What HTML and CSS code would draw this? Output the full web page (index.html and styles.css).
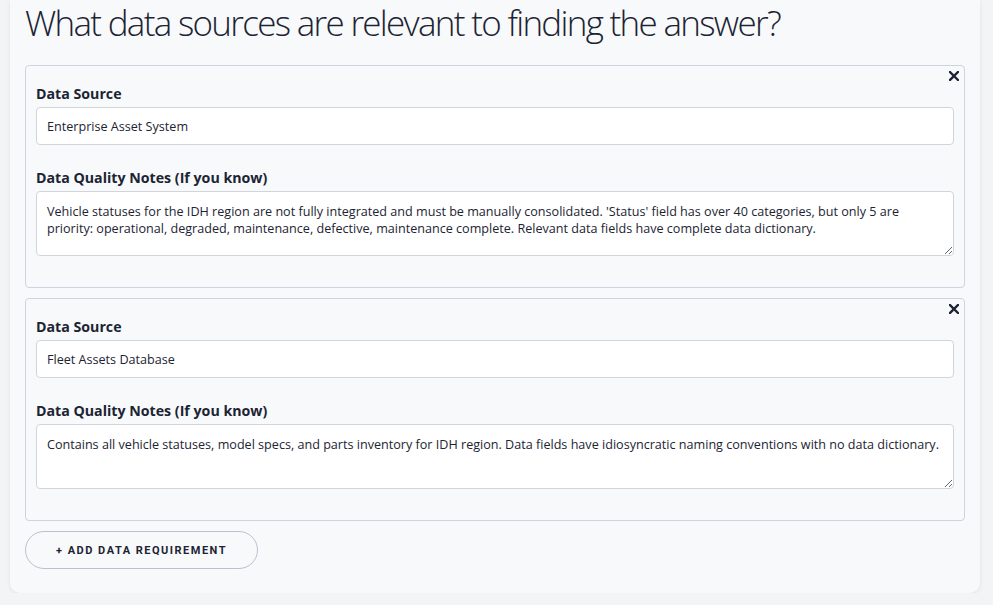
FILE: index.html
```html
<!DOCTYPE html>
<html lang="en">
<head>
  <meta charset="UTF-8" />
  <meta name="viewport" content="width=device-width, initial-scale=1.0" />
  <title>Data Requirements</title>
  <link rel="stylesheet" href="styles.css">
</head>
<body>
  <div class="panel">
    <h1 class="question">What data sources are relevant to finding the answer?</h1>

    <div class="requirement">
      <button class="remove" aria-label="Remove">
        <svg width="10" height="10" viewBox="0 0 10 10"><path d="M1 1L9 9M9 1L1 9" stroke="#1c2433" stroke-width="2.4" stroke-linecap="square"/></svg>
      </button>
      <div class="field">
        <label>Data Source</label>
        <input type="text" value="Enterprise Asset System">
      </div>
      <div class="field">
        <label>Data Quality Notes (If you know)</label>
        <textarea>Vehicle statuses for the IDH region are not fully integrated and must be manually consolidated. 'Status' field has over 40 categories, but only 5 are priority: operational, degraded, maintenance, defective, maintenance complete. Relevant data fields have complete data dictionary.</textarea>
      </div>
    </div>

    <div class="requirement">
      <button class="remove" aria-label="Remove">
        <svg width="10" height="10" viewBox="0 0 10 10"><path d="M1 1L9 9M9 1L1 9" stroke="#1c2433" stroke-width="2.4" stroke-linecap="square"/></svg>
      </button>
      <div class="field">
        <label>Data Source</label>
        <input type="text" value="Fleet Assets Database">
      </div>
      <div class="field">
        <label>Data Quality Notes (If you know)</label>
        <textarea>Contains all vehicle statuses, model specs, and parts inventory for IDH region. Data fields have idiosyncratic naming conventions with no data dictionary.</textarea>
      </div>
    </div>

    <button class="add-btn">+ Add Data Requirement</button>
  </div>
</body>
</html>
```

FILE: styles.css
```css
body {
  margin: 0;
  padding: 0 13px 0 10px;
  background-color: #f3f4f6;
  font-family: 'Segoe UI', 'Open Sans', sans-serif;
  color: #1c2433;
}

.panel {
  background-color: #f8f9fb;
  border-radius: 0 0 10px 10px;
  box-shadow: 0 1px 4px rgba(0, 0, 0, 0.08);
  padding: 0 15px 24px;
}

.question {
  margin: 0 0 20px;
  font-size: 35px;
  font-weight: 300;
  line-height: 45px;
  letter-spacing: -1.7px;
  color: #1c2433;
}

.requirement {
  position: relative;
  border: 1px solid #cdd4de;
  border-radius: 4px;
  padding: 17px 10px 9px;
  margin-bottom: 10px;
}

.remove {
  position: absolute;
  top: 3px;
  right: 3px;
  width: 14px;
  height: 14px;
  padding: 0;
  border: none;
  background: none;
  cursor: pointer;
  display: flex;
  align-items: center;
  justify-content: center;
}

.field {
  margin-bottom: 22px;
}

.field label {
  display: block;
  font-size: 14.2px;
  font-weight: 700;
  line-height: 22px;
  margin-bottom: 2px;
}

.field input,
.field textarea {
  display: block;
  width: 100%;
  box-sizing: border-box;
  border: 1px solid #d0d5dc;
  border-radius: 4px;
  background-color: #fff;
  font-family: 'Segoe UI', 'Open Sans', sans-serif;
  font-size: 12.6px;
  color: #1c2433;
  padding: 0 10px;
}

.field input {
  height: 38px;
}

.field textarea {
  height: 65px;
  padding: 11px 10px;
  line-height: 17px;
  resize: vertical;
}

.add-btn {
  width: 233px;
  height: 38px;
  border: 1px solid #b9c2cf;
  border-radius: 19px;
  background-color: #f8f9fb;
  font-family: Roboto, sans-serif;
  font-size: 11px;
  font-weight: 700;
  letter-spacing: 1.5px;
  text-transform: uppercase;
  color: #1c2433;
  cursor: pointer;
}
```
